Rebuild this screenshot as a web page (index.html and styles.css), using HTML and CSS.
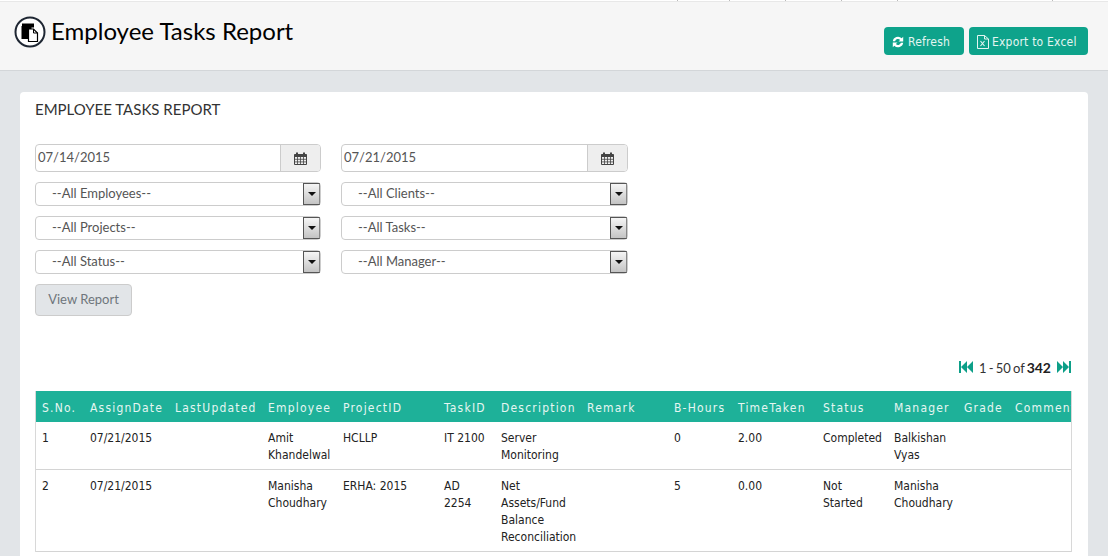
FILE: index.html
```html
<!DOCTYPE html>
<html lang="en">
<head>
  <meta charset="UTF-8" />
  <title>Employee Tasks Report</title>
  <link rel="stylesheet" href="styles.css">
</head>
<body>
  <div class="top-strip">
    <span class="tick t1"></span><span class="tick t2"></span><span class="tick t2"></span><span class="tick t2"></span><span class="tick t3"></span><span class="tick"></span>
  </div>
  <div class="page-head">
    <div class="page-title">
      <svg class="title-icon" width="32" height="32" viewBox="0 0 32 32">
        <circle cx="16" cy="16" r="14.500" fill="#fff" stroke="#1f2733" stroke-width="2"/>
        <path d="M8 7.500h12v4H8z" fill="#000"/>
        <path d="M7.500 10h10v13h-10z" fill="#000"/>
        <path d="M14.500 13h5l4 4v8.500h-9z" fill="#fff" stroke="#000" stroke-width="1.200"/>
        <path d="M19.500 13v4h4" fill="none" stroke="#000" stroke-width="1"/>
      </svg>
      <h1>Employee Tasks Report</h1>
    </div>
    <div class="head-buttons">
      <button class="btn-green btn-refresh">
        <svg width="12" height="12" viewBox="0 0 12 12"><path d="M.800 5.200A5.200 5.200 0 0 1 9.700 2.300L11.200 .800V5.500H6.500L8.100 3.900A3 3 0 0 0 3.100 5.200zM11.200 6.800A5.200 5.200 0 0 1 2.300 9.700L.800 11.200V6.500H5.500L3.900 8.100A3 3 0 0 0 8.900 6.800z" fill="#fff"/></svg>
        Refresh
      </button>
      <button class="btn-green btn-export">
        <svg width="12" height="14" viewBox="0 0 12 14"><path d="M.500.500h7l4 3.500v9.500H.500z M7.500.500V4h4" fill="none" stroke="#e4f5f1" stroke-width="1"/><path d="M3.500 6l4 5M7.500 6l-4 5" stroke="#e4f5f1" stroke-width="1.100"/></svg>
        Export to Excel
      </button>
    </div>
  </div>

  <div class="content">
    <div class="card">
      <h2>EMPLOYEE TASKS REPORT</h2>

      <div class="filters">
        <div class="date-box"><span class="date-value">07/14/2015</span><span class="date-addon"><svg width="13" height="13" viewBox="0 0 13 13"><path d="M.500 2.500h12v10H.500z" fill="none" stroke="#444"/><path d="M.500 2.500h12v2.500H.500z" fill="#444"/><path d="M3 .500v3M10 .500v3" stroke="#444" stroke-width="2"/><path d="M.500 7.300h12M.500 9.900h12M3.500 5v7.500M6.500 5v7.500M9.500 5v7.500" stroke="#444" stroke-width=".8"/></svg></span></div>
        <div class="date-box"><span class="date-value">07/21/2015</span><span class="date-addon"><svg width="13" height="13" viewBox="0 0 13 13"><path d="M.500 2.500h12v10H.500z" fill="none" stroke="#444"/><path d="M.500 2.500h12v2.500H.500z" fill="#444"/><path d="M3 .500v3M10 .500v3" stroke="#444" stroke-width="2"/><path d="M.500 7.300h12M.500 9.900h12M3.500 5v7.500M6.500 5v7.500M9.500 5v7.500" stroke="#444" stroke-width=".8"/></svg></span></div>
        <div class="select-box">--All Employees--<span class="select-arrow"></span></div>
        <div class="select-box">--All Clients--<span class="select-arrow"></span></div>
        <div class="select-box">--All Projects--<span class="select-arrow"></span></div>
        <div class="select-box">--All Tasks--<span class="select-arrow"></span></div>
        <div class="select-box">--All Status--<span class="select-arrow"></span></div>
        <div class="select-box">--All Manager--<span class="select-arrow"></span></div>
      </div>

      <button class="btn-view">View Report</button>

      <div class="pager">
        <svg width="14" height="12" viewBox="0 0 14 12"><path d="M0 0h2v12H0z" fill="#0d9f88"/><path d="M8 0v12L2 6zM14 0v12L8 6z" fill="#0d9f88"/></svg>
        <span class="pager-text">1 - 50 of <b>342</b></span>
        <svg width="14" height="12" viewBox="0 0 14 12"><path d="M12 0h2v12h-2z" fill="#0d9f88"/><path d="M0 0v12l6-6zM6 0v12l6-6z" fill="#0d9f88"/></svg>
      </div>

      <div class="table-wrap">
        <table class="report">
          <colgroup>
            <col class="c-sno"><col class="c-assign"><col class="c-updated"><col class="c-emp"><col class="c-proj">
            <col class="c-task"><col class="c-desc"><col class="c-remark"><col class="c-hours"><col class="c-taken">
            <col class="c-status"><col class="c-mgr"><col class="c-grade"><col class="c-comment">
          </colgroup>
          <thead>
            <tr>
              <th>S.No.</th><th>AssignDate</th><th>LastUpdated</th><th>Employee</th><th>ProjectID</th>
              <th>TaskID</th><th>Description</th><th>Remark</th><th>B-Hours</th><th>TimeTaken</th>
              <th>Status</th><th>Manager</th><th>Grade</th><th>Comment</th>
            </tr>
          </thead>
          <tbody>
            <tr>
              <td>1</td><td>07/21/2015</td><td></td><td>Amit Khandelwal</td><td>HCLLP</td>
              <td>IT 2100</td><td>Server Monitoring</td><td></td><td>0</td><td>2.00</td>
              <td>Completed</td><td>Balkishan Vyas</td><td></td><td></td>
            </tr>
            <tr>
              <td>2</td><td>07/21/2015</td><td></td><td>Manisha Choudhary</td><td>ERHA: 2015</td>
              <td>AD 2254</td><td>Net Assets/Fund Balance Reconciliation</td><td></td><td>5</td><td>0.00</td>
              <td>Not Started</td><td>Manisha Choudhary</td><td></td><td></td>
            </tr>
          </tbody>
        </table>
      </div>
    </div>
  </div>
</body>
</html>
```

FILE: styles.css
```css
* {
  box-sizing: border-box;
}

html, body {
  margin: 0;
  height: 100%;
  overflow: hidden;
}

body {
  font-family: "Lato", sans-serif;
  background-color: #e2e5e8;
  color: #333;
}

.top-strip {
  display: flex;
  height: 1px;
  padding-left: 677px;
  background-color: #fff;
}

.tick {
  border-left: 1px solid #bbb;
}

.t1 { width: 52px; }
.t2 { width: 56px; }
.t3 { width: 155px; }

.page-head {
  display: flex;
  justify-content: space-between;
  height: 70px;
  padding: 0 20px 0 14px;
  background-color: #f6f6f6;
  border-top: 1px solid #e8e8e8;
  border-bottom: 1px solid #d3d6d9;
}

.page-title {
  display: flex;
  align-items: flex-start;
  gap: 5px;
  padding-top: 14px;
}

.page-title h1 {
  margin: 0;
  font-size: 24px;
  font-weight: 400;
  line-height: 30px;
  color: #000;
}

.head-buttons {
  display: flex;
  gap: 5px;
  padding-top: 25px;
}

.btn-green {
  display: flex;
  align-items: center;
  height: 28px;
  padding: 1px 0 0 8px;
  font-family: "DejaVu Sans", sans-serif;
  font-stretch: condensed;
  font-size: 12px;
  letter-spacing: 0.2px;
  color: #e4f5f1;
  background-color: #0ea38b;
  border: none;
  border-radius: 4px;
}

.btn-refresh {
  width: 80px;
  gap: 4px;
}

.btn-export {
  width: 119px;
  gap: 3px;
}

.content {
  padding: 21px 20px 0;
}

.card {
  height: 464px;
  padding: 7px 16px 0 15px;
  overflow: hidden;
  background-color: #fff;
  border-radius: 4px 4px 0 0;
}

.card h2 {
  margin: 0;
  font-size: 15px;
  font-weight: 400;
  line-height: 20px;
  color: #333;
}

.filters {
  display: grid;
  grid-template-columns: 286px 287px;
  column-gap: 20px;
  row-gap: 10px;
  margin-top: 25px;
  width: 593px;
}

.date-box {
  display: flex;
  height: 28px;
  border: 1px solid #ccc;
  border-radius: 4px;
  font-size: 13px;
  color: #555;
}

.date-value {
  flex: 1;
  padding-left: 2px;
  line-height: 25px;
}

.date-addon {
  display: flex;
  align-items: center;
  justify-content: center;
  width: 40px;
  background-color: #eee;
  border-left: 1px solid #ccc;
  border-radius: 0 3px 3px 0;
}

.select-box {
  position: relative;
  height: 24px;
  padding-left: 16px;
  border: 1px solid #ccc;
  border-radius: 4px;
  font-size: 13px;
  line-height: 20px;
  color: #555;
}

.select-arrow {
  position: absolute;
  top: 0;
  right: 0;
  width: 17px;
  height: 22px;
  background: linear-gradient(#f6f6f6, #c4c4c4);
  border: 1px solid #555;
  border-right-color: #888;
}

.select-arrow::after {
  content: "";
  position: absolute;
  top: 8px;
  left: 4px;
  border-style: solid;
  border-width: 4px 4px 0;
  border-color: #111 transparent transparent;
}

.btn-view {
  display: block;
  width: 97px;
  height: 32px;
  margin-top: 10px;
  padding: 0 0 3px;
  font-family: "Lato", sans-serif;
  font-size: 13px;
  color: #6f767c;
  background-color: #e2e5e8;
  border: 1px solid #ccc;
  border-radius: 4px;
}

.pager {
  display: flex;
  justify-content: flex-end;
  align-items: center;
  gap: 6px;
  height: 18px;
  margin-top: 42px;
  padding-right: 1px;
  font-size: 13px;
  word-spacing: -1.2px;
  color: #333;
}

.pager b {
  font-size: 14px;
  color: #222;
}

.table-wrap {
  margin-top: 15px;
  overflow: hidden;
  border-right: 1px solid #d8d8d8;
  border-left: 1px solid #d8d8d8;
}

.report {
  width: 1120px;
  table-layout: fixed;
  border-collapse: collapse;
  font-family: "DejaVu Sans", sans-serif;
  font-stretch: condensed;
  font-size: 12px;
  color: #222;
}

.c-sno { width: 48px; }
.c-assign { width: 85px; }
.c-updated { width: 93px; }
.c-emp { width: 75px; }
.c-proj { width: 101px; }
.c-task { width: 57px; }
.c-desc { width: 86px; }
.c-remark { width: 87px; }
.c-hours { width: 64px; }
.c-taken { width: 85px; }
.c-status { width: 71px; }
.c-mgr { width: 70px; }
.c-grade { width: 51px; }
.c-comment { width: 147px; }

.report th {
  height: 31px;
  padding: 2px 0 0 6px;
  font-weight: 400;
  letter-spacing: 1.2px;
  text-align: left;
  white-space: nowrap;
  color: #e6f6f2;
  background-color: #1eb199;
}

.report td {
  padding: 8px 6px 5px 6px;
  line-height: 17px;
  vertical-align: top;
  border-bottom: 1px solid #d4d4d4;
}
```
